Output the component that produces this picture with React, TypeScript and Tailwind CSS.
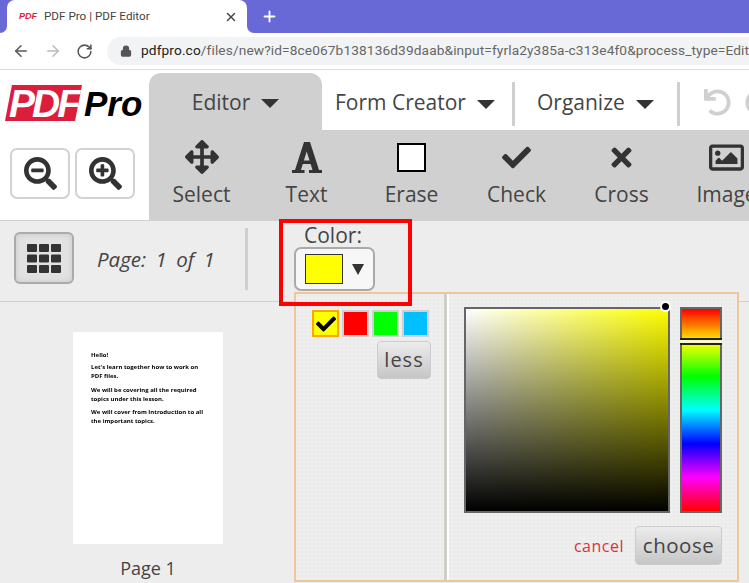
import React from 'react';
import { ArrowLeft, ArrowRight, Lock, Plus, RotateCw, X } from 'lucide-react';
import { FaArrowsAlt, FaCheck, FaRegImage, FaSearchMinus, FaSearchPlus, FaTimes, FaUndo } from 'react-icons/fa';

// Slab serif "A" and the square grid button icon
function FontIcon() {
  return (
    <svg width="30" height="31" viewBox="0 0 30 31" fill="currentColor">
      <path fillRule="evenodd" d="M0 31v-3h3L12 0h6l9 28h3v3H17v-3h3.5l-1.9-6h-7.8l-1.9 6h3.6v3ZM11.9 18.5h5.6L14.7 9.5Z" />
    </svg>
  );
}

function GridIcon() {
  const cells = [0, 1, 2, 3, 4, 5, 6, 7, 8];
  return (
    <svg width="34" height="29" viewBox="0 0 34 29" fill="currentColor">
      {cells.map((c) => (
        <rect key={c} x={(c % 3) * 12} y={Math.floor(c / 3) * 10.5} width="10" height="8" rx="1" />
      ))}
    </svg>
  );
}

const tools = [
  { label: 'Select', icon: <FaArrowsAlt size={34} /> },
  { label: 'Text', icon: <FontIcon /> },
  { label: 'Erase', icon: <div className="w-[29px] h-[29px] bg-white border-[2px] border-black" /> },
  { label: 'Check', icon: <FaCheck size={29} /> },
  { label: 'Cross', icon: <FaTimes size={29} /> },
  { label: 'Image', icon: <FaRegImage size={35} /> },
];

function Caret() {
  return <span className="inline-block w-0 h-0 border-x-[9px] border-x-transparent border-t-[9px] border-t-[#333] ml-[11px] mt-[2px]" />;
}

function BrowserChrome() {
  return (
    <div>
      <div className="h-[33px] bg-[#6868d6] flex items-end">
        <div className="w-[7px] h-[8px] bg-white shrink-0">
          <div className="h-full bg-[#6868d6] rounded-br-[8px]" />
        </div>
        <div className="w-[240px] h-[33px] bg-white rounded-t-[8px] flex items-center pl-[12px] pr-[9px] shrink-0">
          <span className="w-[17px] text-[9px] font-bold italic text-[#dc1e3c] font-['Liberation_Sans',sans-serif] leading-none">PDF</span>
          <span className="ml-[8px] text-[11.7px] text-[#444] font-['Roboto',sans-serif] flex-1">PDF Pro | PDF Editor</span>
          <X size={14} strokeWidth={2.4} className="text-[#444]" />
        </div>
        <div className="w-[7px] h-[8px] bg-white shrink-0">
          <div className="h-full bg-[#6868d6] rounded-bl-[8px]" />
        </div>
        <div className="self-center ml-[7px] text-white">
          <Plus size={17} strokeWidth={2.6} />
        </div>
      </div>
      <div className="h-[37px] bg-white border-b-[1px] border-[#dcdcdc] flex items-center">
        <ArrowLeft size={18} strokeWidth={2} className="ml-[12px] text-[#555]" />
        <ArrowRight size={18} strokeWidth={2} className="ml-[14px] text-[#bbb]" />
        <RotateCw size={17} strokeWidth={2.2} className="ml-[14px] text-[#555]" />
        <div className="ml-[14px] h-[28px] flex-1 bg-[#f1f3f4] rounded-l-[14px] flex items-center pl-[13px] overflow-hidden -mt-[1px]">
          <Lock size={12} strokeWidth={2.5} className="text-[#555] fill-[#555] shrink-0" />
          <span className="ml-[9px] text-[13.7px] whitespace-nowrap text-[#666] font-['Roboto',sans-serif] tracking-[0.12px]">
            <span className="text-[#222]">pdfpro.co</span>/files/new?id=8ce067b138136d39daab&amp;input=fyrla2y385a-c313e4f0&amp;process_type=Edit
          </span>
        </div>
      </div>
    </div>
  );
}

function Header() {
  return (
    <div className="h-[150px] flex bg-white font-['Open_Sans',sans-serif] text-[#444]">
      <div className="w-[149px] shrink-0 pl-[5px]">
        <div className="mt-[15px] flex items-center h-[36px] font-['Liberation_Sans',sans-serif] font-bold italic">
          <span className="w-[77px] h-[36px] bg-[#dc1e3c] [clip-path:polygon(9%_0,100%_0,91%_100%,0_100%)] flex items-center justify-center text-white text-[39px] tracking-[-3px] leading-none">PDF</span>
          <span className="text-black text-[35px] leading-none ml-[2px]">Pro</span>
        </div>
        <div className="mt-[27px] pl-[5px] flex gap-[5px]">
          <button className="w-[60px] h-[51px] border-[2px] border-[#d2d2d2] rounded-[7px] flex items-center justify-center text-[#333]">
            <FaSearchMinus size={33} />
          </button>
          <button className="w-[60px] h-[51px] border-[2px] border-[#d2d2d2] rounded-[7px] flex items-center justify-center text-[#333]">
            <FaSearchPlus size={33} />
          </button>
        </div>
      </div>
      <div className="flex-1 min-w-0 overflow-hidden">
        <div className="h-[60px] pt-[3px] flex items-stretch whitespace-nowrap text-[21px]">
          <div className="w-[173px] bg-[#d0d0d0] rounded-t-[12px] pt-[2px] flex items-center justify-center shrink-0">
            Editor<Caret />
          </div>
          <div className="flex items-center pl-[13px] pb-[2px] w-[193px] h-[44px] mt-[9px] border-r-[3px] border-[#d0d0d0] shrink-0">
            Form Creator<Caret />
          </div>
          <div className="flex items-center pl-[22px] pb-[2px] w-[165px] h-[44px] mt-[9px] border-r-[3px] border-[#d0d0d0] shrink-0">
            Organize<Caret />
          </div>
          <div className="flex items-center pl-[24px] pb-[4px] mt-[9px] h-[44px] shrink-0 text-[#d0d0d0]">
            <FaUndo size={27} />
            <FaUndo size={27} className="ml-[14px] -scale-x-100" />
          </div>
        </div>
        <div className="h-[90px] bg-[#d0d0d0] flex">
          {tools.map((tool) => (
            <div key={tool.label} className="w-[105px] shrink-0 flex flex-col items-center">
              <div className="h-[32px] mt-[11px] flex items-center justify-center text-[#333]">{tool.icon}</div>
              <span className="mt-[7px] text-[21px] leading-[28px]">{tool.label}</span>
            </div>
          ))}
        </div>
      </div>
    </div>
  );
}

function SubBar() {
  return (
    <div className="h-[82px] bg-[#ededed] border-t-[1px] border-b-[1px] border-[#d0d0d0] flex font-['Open_Sans',sans-serif] text-[#444]">
      <button className="ml-[14px] mt-[11px] w-[60px] h-[52px] bg-[#e2e2e2] shadow-[inset_0_0_6px_#c8c8c8] border-[2px] border-[#aaa] rounded-[6px] flex items-center justify-center text-[#333] shrink-0">
        <GridIcon />
      </button>
      <span className="ml-[23px] mt-[24px] text-[20.5px] leading-[28px] italic w-[148px] [word-spacing:4px] shrink-0">Page: 1 of 1</span>
      <div className="w-[3px] h-[62px] mt-[7px] bg-[#cfcfcf] shrink-0" />
      <div className="ml-[46px] mt-[2px] w-[81px] shrink-0">
        <div className="text-[21px] leading-[24px] pl-[10px]">Color:</div>
        <div className="w-[81px] h-[44px] bg-[#f7f7f7] border-[2px] border-[#aaa] rounded-[7px] flex items-center pl-[9px]">
          <div className="w-[38px] h-[30px] bg-[#ffff00] border-[1px] border-[#333]" />
          <span className="ml-[9px] w-0 h-0 border-x-[6px] border-x-transparent border-t-[11px] border-t-[#333]" />
        </div>
      </div>
    </div>
  );
}

function Thumbnail() {
  return (
    <div className="w-[294px] flex flex-col items-center pl-[2px] font-['Open_Sans',sans-serif]">
      <div className="mt-[30px] w-[150px] h-[212px] bg-white pt-[19px] pl-[18px] pr-[18px]">
        <div className="text-[6px] font-bold leading-[9px] text-black blur-[0.5px]">
          <p>Hello!</p>
          <p className="mt-[3px]">Let's learn together how to work on PDF files.</p>
          <p className="mt-[5px]">We will be covering all the required topics under this lesson.</p>
          <p className="mt-[4px]">We will cover from Introduction to all the important topics.</p>
        </div>
      </div>
      <span className="mt-[12px] text-[18px] leading-[24px] text-[#444]">Page 1</span>
    </div>
  );
}

function ColorPopup() {
  return (
    <div className="absolute left-[294px] top-[292px] w-[445px] h-[290px] border-[2px] border-[#efc69c] bg-[#eeeeee] bg-[radial-gradient(#e9e9e9_1px,transparent_1px)] bg-[length:4px_4px] flex font-['Open_Sans',sans-serif]">
      <div className="w-[151px] border-r-[3px] border-[#cfcfca] pt-[16px] pl-[16px] shrink-0">
        <div className="flex gap-[3px]">
          <div className="w-[27px] h-[27px] bg-[#ffff00] border-[2px] border-[#ffa500] flex items-center justify-center text-black">
            <FaCheck size={20} />
          </div>
          <div className="w-[27px] h-[27px] bg-[#ff0000] border-[2px] border-[#d0d0d0]" />
          <div className="w-[27px] h-[27px] bg-[#00ff00] border-[2px] border-[#d0d0d0]" />
          <div className="w-[27px] h-[27px] bg-[#00bfff] border-[2px] border-[#d0d0d0]" />
        </div>
        <div className="mt-[4px] flex justify-end pr-[13px]">
          <button className="w-[54px] h-[38px] rounded-[4px] border-[1px] border-[#ccc] bg-gradient-to-b from-[#ececec] to-[#c6c6c6] text-[20px] leading-none text-[#444] tracking-[1px]">less</button>
        </div>
      </div>
      <div className="flex-1 border-l-[2px] border-white pl-[15px] pt-[13px]">
        <div className="flex items-start">
          <div className="relative w-[206px] h-[206px] border-[2px] border-[#666] bg-[linear-gradient(to_top,#000,transparent),linear-gradient(to_right,#fff,#ffff00)]">
            <div className="absolute -right-[3px] -top-[8px] w-[11px] h-[11px] rounded-full bg-black border-[2px] border-white" />
          </div>
          <div className="relative ml-[10px] w-[42px] h-[206px] border-[2px] border-[#666] bg-[linear-gradient(to_bottom,#f00,#ff0,#0f0,#0ff,#00f,#f0f,#f00)]">
            <div className="absolute -left-[2px] -right-[2px] top-[29px] h-[7px] bg-[#fdf8c8] border-y-[2px] border-[#222]" />
          </div>
        </div>
        <div className="mt-[13px] flex items-center justify-end pr-[15px]">
          <span className="text-[16px] text-[#d8333f] tracking-[0.5px]">cancel</span>
          <button className="ml-[11px] w-[87px] h-[39px] rounded-[4px] border-[1px] border-[#ccc] bg-gradient-to-b from-[#ececec] to-[#c6c6c6] text-[20.5px] leading-none text-[#444] tracking-[0.5px]">choose</button>
        </div>
      </div>
    </div>
  );
}

export default function App() {
  return (
    <div className="relative w-[749px] h-[583px] overflow-hidden bg-[#ededed]">
      <BrowserChrome />
      <Header />
      <SubBar />
      <Thumbnail />
      <ColorPopup />
      {/* Red highlight drawn over the colour control */}
      <div className="absolute left-[279px] top-[219px] w-[133px] h-[87px] border-[4px] border-[#ff0000] pointer-events-none" />
    </div>
  );
}
